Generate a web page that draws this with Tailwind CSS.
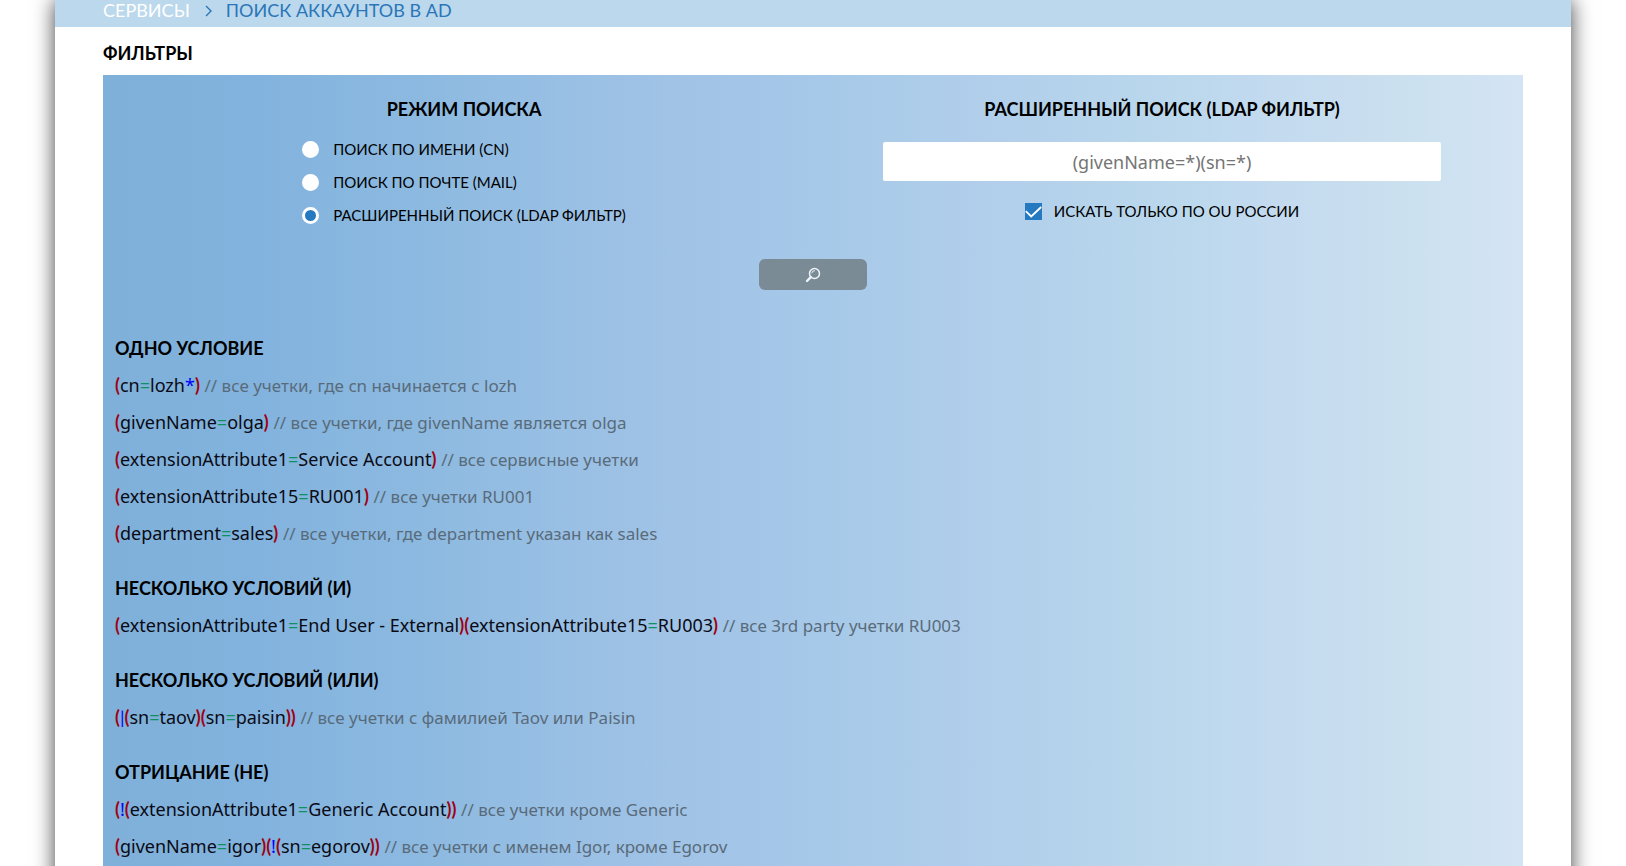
<!DOCTYPE html>
<html lang="ru">
<head>
<meta charset="utf-8">
<meta name="viewport" content="width=device-width, initial-scale=1">
<title>Поиск аккаунтов в AD</title>
<script src="https://cdn.jsdelivr.net/npm/@tailwindcss/browser@4"></script>
</head>
<body class="bg-white font-['Noto_Sans',sans-serif] text-lg text-black">
<div class="mx-[55px] min-h-screen overflow-hidden bg-white shadow-[0_0_20px_rgba(0,0,0,0.75)]">
  <nav aria-label="Навигация" class="flex h-[27px] items-end gap-3 bg-[#bbd8ec] px-12 pb-[5px] text-lg leading-6 font-['Lato',sans-serif]">
    <a href="#" class="text-white">СЕРВИСЫ</a>
    <svg class="mb-[5px] h-3 w-3" viewBox="0 0 12 12" fill="none" stroke="#2b76b8" stroke-width="1.4" aria-hidden="true"><path d="M4 1l5 5-5 5"/></svg>
    <a href="#" class="text-[#2b76b8]">ПОИСК АККАУНТОВ В AD</a>
  </nav>
  <main class="px-12">
    <h1 class="pt-[14px] pb-[10px] font-['Lato',sans-serif] text-lg leading-6 font-bold">ФИЛЬТРЫ</h1>
    <section class="bg-[linear-gradient(90deg,#7fb0d9_0%,#82b3de_11%,#8cb9e0_22%,#98bfe4_32%,#a0c3e6_40%,#a5c8e9_49%,#abcce9_56%,#b1ceeb_62%,#b5d3eb_69%,#bbd8ed_76%,#c4daef_83%,#cae0ef_91%,#d4e4f5_100%)] px-3 pt-5 pb-6">
      <form onsubmit="return false">
        <div class="grid grid-cols-2">
          <fieldset class="flex flex-col items-center">
            <legend class="mx-auto font-['Lato',sans-serif] text-lg leading-7 font-bold">РЕЖИМ ПОИСКА</legend>
            <div class="mt-4 flex flex-col gap-3 font-['Lato',sans-serif] text-[15px] leading-[21px]">
              <label class="flex items-center gap-[14px]"><input type="radio" name="mode" class="size-[17px] appearance-none rounded-full border-[3px] border-white bg-white checked:bg-[#2579c0]">ПОИСК ПО ИМЕНИ (CN)</label>
              <label class="flex items-center gap-[14px]"><input type="radio" name="mode" class="size-[17px] appearance-none rounded-full border-[3px] border-white bg-white checked:bg-[#2579c0]">ПОИСК ПО ПОЧТЕ (MAIL)</label>
              <label class="flex items-center gap-[14px]"><input type="radio" name="mode" checked class="size-[17px] appearance-none rounded-full border-[3px] border-white bg-white checked:bg-[#2579c0]">РАСШИРЕННЫЙ ПОИСК (LDAP ФИЛЬТР)</label>
            </div>
          </fieldset>
          <div class="flex flex-col items-center">
            <label for="ldap" class="font-['Lato',sans-serif] text-lg leading-7 font-bold">РАСШИРЕННЫЙ ПОИСК (LDAP ФИЛЬТР)</label>
            <input id="ldap" type="text" placeholder="(givenName=*)(sn=*)" class="mt-[19px] h-[39px] w-4/5 rounded-[2px] bg-white text-center text-lg placeholder:text-[#757575]">
            <label class="mt-5 flex items-center gap-3 font-['Lato',sans-serif] text-[15px] leading-[21px]">
              <span class="grid size-[17px]">
                <input type="checkbox" checked class="col-start-1 row-start-1 size-[17px] appearance-none bg-white checked:bg-[#2579c0]">
                <svg class="pointer-events-none col-start-1 row-start-1 size-[17px]" viewBox="0 0 17 17" fill="none" stroke="#fff" stroke-width="1.8" aria-hidden="true"><path d="M.8 8.2l5.4 5.2L16.2 4"/></svg>
              </span>
              ИСКАТЬ ТОЛЬКО ПО OU РОССИИ</label>
          </div>
        </div>
        <button type="submit" aria-label="Поиск" class="mx-auto mt-[33px] flex h-[31px] w-[108px] items-center justify-center rounded-md bg-[#7b8b96]">
          <svg class="size-4" viewBox="0 0 16 16" fill="none" stroke="#eef4fa" aria-hidden="true"><circle cx="9.5" cy="6.5" r="5" stroke-width="1.5"/><path d="M6.8 6.2a2.8 2.8 0 0 1 3-2.5" stroke-width="1"/><path d="M5.8 10.2L2 14" stroke-width="2.4" stroke-linecap="round"/></svg>
        </button>
      </form>
      <div class="mt-10 flex flex-col gap-[18px] leading-[37px] text-[#0a0a14]">
        <section>
          <h2 class="font-['Lato',sans-serif] font-bold text-black">ОДНО УСЛОВИЕ</h2>
          <p><b class="font-['Lato',sans-serif] text-[#a00010]">(</b>cn<span class="text-[#109060]">=</span>lozh<span class="text-[#0000ff]">*</span><b class="font-['Lato',sans-serif] text-[#a00010]">)</b> <span class="text-[17px] text-[#596b7a]">// все учетки, где cn начинается с lozh</span></p>
          <p><b class="font-['Lato',sans-serif] text-[#a00010]">(</b>givenName<span class="text-[#109060]">=</span>olga<b class="font-['Lato',sans-serif] text-[#a00010]">)</b> <span class="text-[17px] text-[#596b7a]">// все учетки, где givenName является olga</span></p>
          <p><b class="font-['Lato',sans-serif] text-[#a00010]">(</b>extensionAttribute1<span class="text-[#109060]">=</span>Service Account<b class="font-['Lato',sans-serif] text-[#a00010]">)</b> <span class="text-[17px] text-[#596b7a]">// все сервисные учетки</span></p>
          <p><b class="font-['Lato',sans-serif] text-[#a00010]">(</b>extensionAttribute15<span class="text-[#109060]">=</span>RU001<b class="font-['Lato',sans-serif] text-[#a00010]">)</b> <span class="text-[17px] text-[#596b7a]">// все учетки RU001</span></p>
          <p><b class="font-['Lato',sans-serif] text-[#a00010]">(</b>department<span class="text-[#109060]">=</span>sales<b class="font-['Lato',sans-serif] text-[#a00010]">)</b> <span class="text-[17px] text-[#596b7a]">// все учетки, где department указан как sales</span></p>
        </section>
        <section>
          <h2 class="font-['Lato',sans-serif] font-bold text-black">НЕСКОЛЬКО УСЛОВИЙ (И)</h2>
          <p><b class="font-['Lato',sans-serif] text-[#a00010]">(</b>extensionAttribute1<span class="text-[#109060]">=</span>End User - External<b class="font-['Lato',sans-serif] text-[#a00010]">)(</b>extensionAttribute15<span class="text-[#109060]">=</span>RU003<b class="font-['Lato',sans-serif] text-[#a00010]">)</b> <span class="text-[17px] text-[#596b7a]">// все 3rd party учетки RU003</span></p>
        </section>
        <section>
          <h2 class="font-['Lato',sans-serif] font-bold text-black">НЕСКОЛЬКО УСЛОВИЙ (ИЛИ)</h2>
          <p><b class="font-['Lato',sans-serif] text-[#a00010]">(</b><span class="font-['Lato',sans-serif] text-[#0000ff]">|</span><b class="font-['Lato',sans-serif] text-[#a00010]">(</b>sn<span class="text-[#109060]">=</span>taov<b class="font-['Lato',sans-serif] text-[#a00010]">)(</b>sn<span class="text-[#109060]">=</span>paisin<b class="font-['Lato',sans-serif] text-[#a00010]">))</b> <span class="text-[17px] text-[#596b7a]">// все учетки с фамилией Taov или Paisin</span></p>
        </section>
        <section>
          <h2 class="font-['Lato',sans-serif] font-bold text-black">ОТРИЦАНИЕ (НЕ)</h2>
          <p><b class="font-['Lato',sans-serif] text-[#a00010]">(</b><span class="text-[#0000ff]">!</span><b class="font-['Lato',sans-serif] text-[#a00010]">(</b>extensionAttribute1<span class="text-[#109060]">=</span>Generic Account<b class="font-['Lato',sans-serif] text-[#a00010]">))</b> <span class="text-[17px] text-[#596b7a]">// все учетки кроме Generic</span></p>
          <p><b class="font-['Lato',sans-serif] text-[#a00010]">(</b>givenName<span class="text-[#109060]">=</span>igor<b class="font-['Lato',sans-serif] text-[#a00010]">)(</b><span class="text-[#0000ff]">!</span><b class="font-['Lato',sans-serif] text-[#a00010]">(</b>sn<span class="text-[#109060]">=</span>egorov<b class="font-['Lato',sans-serif] text-[#a00010]">))</b> <span class="text-[17px] text-[#596b7a]">// все учетки с именем Igor, кроме Egorov</span></p>
        </section>
      </div>
    </section>
  </main>
</div>
</body>
</html>
